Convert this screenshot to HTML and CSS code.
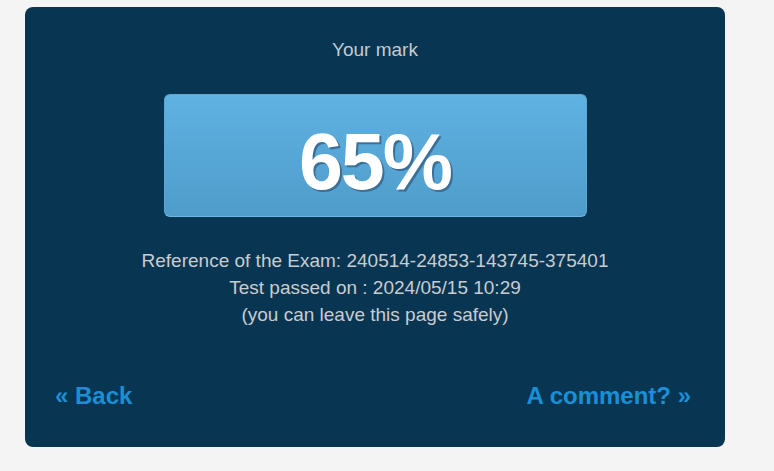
FILE: index.html
```html
<!DOCTYPE html>
<html>
<head>
<meta charset="utf-8">
<link rel="stylesheet" href="styles.css">
</head>
<body>
<div class="card">
  <div class="label">Your mark</div>
  <div class="score">65%</div>
  <div class="info">
    <div>Reference of the Exam: 240514-24853-143745-375401</div>
    <div>Test passed on : 2024/05/15 10:29</div>
    <div>(you can leave this page safely)</div>
  </div>
  <div class="links">
    <a class="link" href="#">« Back</a>
    <a class="link" href="#">A comment? »</a>
  </div>
</div>
</body>
</html>
```
FILE: styles.css
```css
html, body { margin: 0; padding: 0; }
body {
  background: #f4f4f4;
  font-family: "Liberation Sans", Arial, sans-serif;
  width: 774px;
  height: 471px;
  overflow: hidden;
}
.card {
  margin: 7px 0 0 25px;
  width: 700px;
  height: 440px;
  box-sizing: border-box;
  background: #083652;
  border-radius: 8px;
  display: flex;
  flex-direction: column;
  align-items: center;
  padding-top: 31px;
}
.label {
  font-size: 19px;
  line-height: 24px;
  color: #c4cbd0;
}
.score {
  margin-top: 32px;
  width: 423px;
  height: 123px;
  box-sizing: border-box;
  padding-top: 12px;
  border-radius: 6px;
  background: linear-gradient(#5fb2e2, #4f9cca);
  border: 1px solid #5aa8d8;
  border-bottom-color: #6ab8e6;
  display: flex;
  align-items: center;
  justify-content: center;
  color: #ffffff;
  font-weight: bold;
  font-size: 79px;
  letter-spacing: -2px;
  text-shadow: 2px 2px 0 #3a6f98;
}
.info {
  margin-top: 30px;
  text-align: center;
  color: #c8ccd0;
  font-size: 19px;
  line-height: 27px;
}
.links {
  align-self: stretch;
  display: flex;
  justify-content: space-between;
  padding: 0 34px 0 30px;
  margin-top: 53px;
}
.link {
  font-weight: bold;
  font-size: 24px;
  line-height: 30px;
  color: #1a8fd6;
  text-decoration: none;
}
```
